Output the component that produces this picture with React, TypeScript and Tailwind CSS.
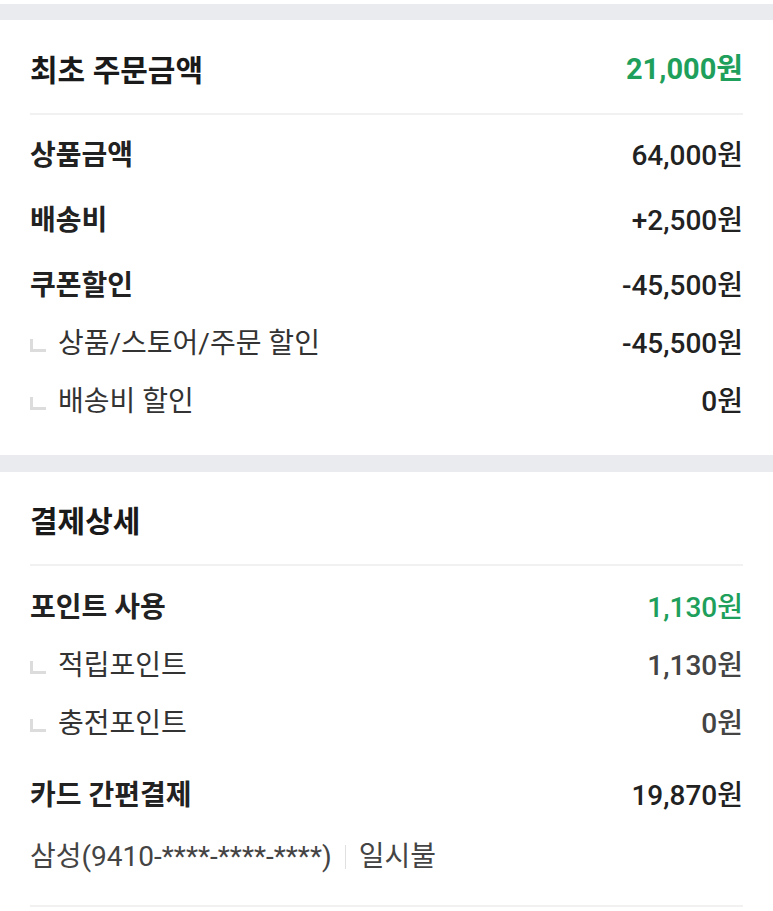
import React from "react";

const font = { fontFamily: "Roboto, 'Noto Sans CJK KR', sans-serif" };

function Corner() {
  return <span className="inline-block w-[16px] h-[13px] border-l-[3px] border-b-[3px] border-[#dcdcdc] mr-[12px] mt-[2px]" />;
}

function MainRow({ label, value, green, className = "" }: { label: string; value: string; green?: boolean; className?: string }) {
  return (
    <div className={`flex items-center justify-between h-[58px] ${className}`}>
      <span className="text-[28px] font-semibold text-[#222]">{label}</span>
      <span className={`text-[28px] font-medium ${green ? "text-[#1e9f5b]" : "text-[#222]"}`}>{value}</span>
    </div>
  );
}

function SubRow({ label, value, light }: { label: string; value: string; light?: boolean }) {
  return (
    <div className="flex items-center justify-between h-[58px]">
      <span className="flex items-center text-[28px] font-normal text-[#333]">
        <Corner />
        {label}
      </span>
      <span className={`text-[28px] font-medium ${light ? "text-[#444]" : "text-[#222]"}`}>{value}</span>
    </div>
  );
}

export default function App() {
  return (
    <div className="w-[773px] h-[911px] bg-white overflow-hidden" style={font}>
      <div className="h-[4px] bg-white" />
      <div className="h-[16px] bg-[#e9ebee]" />
      <section className="px-[30px]">
        <div className="flex items-center justify-between h-[93px] pt-[7px]">
          <span className="text-[30px] font-bold text-[#1a1a1a]">최초 주문금액</span>
          <span className="text-[29px] font-bold text-[#1e9f5b]">21,000원</span>
        </div>
        <div className="h-[2px] bg-[#f1f1f1]" />
        <div className="pt-[12px] pb-[24px]">
          <MainRow label="상품금액" value="64,000원" />
          <MainRow label="배송비" value="+2,500원" className="mt-[7px]" />
          <MainRow label="쿠폰할인" value="-45,500원" className="mt-[7px]" />
          <SubRow label="상품/스토어/주문 할인" value="-45,500원" />
          <SubRow label="배송비 할인" value="0원" />
        </div>
      </section>
      <div className="h-[17px] bg-[#e9ebee]" />
      <section className="px-[30px]">
        <div className="flex items-center h-[92px] pt-[6px]">
          <span className="text-[30px] font-bold text-[#1a1a1a]">결제상세</span>
        </div>
        <div className="h-[2px] bg-[#f1f1f1]" />
        <div className="pt-[13px]">
          <MainRow label="포인트 사용" value="1,130원" green />
          <SubRow label="적립포인트" value="1,130원" light />
          <SubRow label="충전포인트" value="0원" light />
          <MainRow label="카드 간편결제" value="19,870원" className="mt-[14px]" />
          <div className="flex items-center h-[64px] text-[28px] text-[#444]">
            <span>삼성(9410-****-****-****)</span>
            <span className="inline-block w-[1px] h-[24px] bg-[#e0e0e0] mx-[13px]" />
            <span>일시불</span>
          </div>
          <div className="h-[2px] bg-[#f1f1f1] mt-[16px]" />
        </div>
      </section>
    </div>
  );
}
